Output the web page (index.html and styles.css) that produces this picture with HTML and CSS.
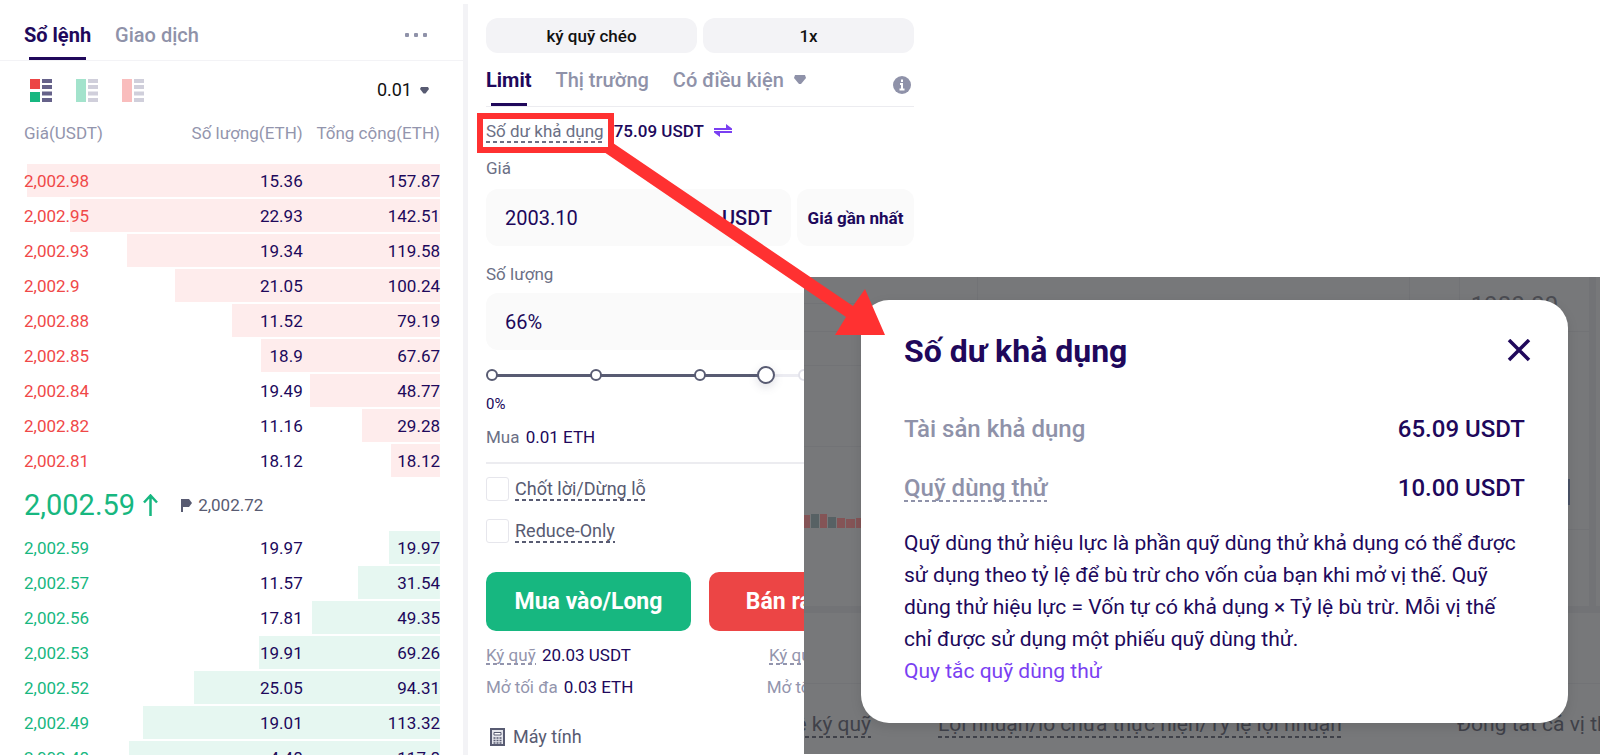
FILE: index.html
```html
<!DOCTYPE html>
<html lang="vi">
<head>
    <meta charset="UTF-8">
    <meta name="viewport" content="width=device-width, initial-scale=1.0">
    <title>Số dư khả dụng</title>
    <link rel="stylesheet" href="styles.css">
</head>
<body>
    <div class="page">
        <section class="order-book">
            <nav class="book-tabs">
                <button type="button" class="tab active">Sổ lệnh</button>
                <button type="button" class="tab">Giao dịch</button>
                <button type="button" class="more" aria-label="Thêm">
                    <svg width="22" height="4" viewBox="0 0 22 4" fill="#8f92a9">
                        <rect x="0" y="0" width="4" height="4" rx="1"/>
                        <rect x="9" y="0" width="4" height="4" rx="1"/>
                        <rect x="18" y="0" width="4" height="4" rx="1"/>
                    </svg>
                </button>
            </nav>

            <div class="book-tools">
                <button type="button" class="view" aria-label="Tất cả">
                    <svg width="22" height="23" viewBox="0 0 22 23">
                        <rect width="10" height="10" fill="#ec4545"/>
                        <rect y="13" width="10" height="10" fill="#17b780"/>
                        <path d="M12 2h10M12 8h10M12 14.500h10M12 21h10" stroke="#66628a" stroke-width="4"/>
                    </svg>
                </button>
                <button type="button" class="view" aria-label="Lệnh mua">
                    <svg width="22" height="23" viewBox="0 0 22 23">
                        <rect width="10" height="23" fill="#a3e3cc"/>
                        <path d="M12 2h10M12 8h10M12 14.500h10M12 21h10" stroke="#d0cfdb" stroke-width="4"/>
                    </svg>
                </button>
                <button type="button" class="view" aria-label="Lệnh bán">
                    <svg width="22" height="23" viewBox="0 0 22 23">
                        <rect width="10" height="23" fill="#f9bdbd"/>
                        <path d="M12 2h10M12 8h10M12 14.500h10M12 21h10" stroke="#d0cfdb" stroke-width="4"/>
                    </svg>
                </button>
                <button type="button" class="step">
                    0.01
                    <svg width="9" height="7" viewBox="0 0 9 7"><path d="M1 0h7l1 2-3.500 4.500h-2L0 2z" fill="#585b72"/></svg>
                </button>
            </div>

            <table class="orders asks">
                <thead>
                    <tr><th>Giá(USDT)</th><th>Số lượng(ETH)</th><th>Tổng cộng(ETH)</th></tr>
                </thead>
                <tbody>
                    <tr style="--depth: 99.4%"><td>2,002.98</td><td>15.36</td><td>157.87</td></tr>
                    <tr style="--depth: 89%"><td>2,002.95</td><td>22.93</td><td>142.51</td></tr>
                    <tr style="--depth: 75.2%"><td>2,002.93</td><td>19.34</td><td>119.58</td></tr>
                    <tr style="--depth: 63.7%"><td>2,002.9</td><td>21.05</td><td>100.24</td></tr>
                    <tr style="--depth: 50%"><td>2,002.88</td><td>11.52</td><td>79.19</td></tr>
                    <tr style="--depth: 43%"><td>2,002.85</td><td>18.9</td><td>67.67</td></tr>
                    <tr style="--depth: 31.3%"><td>2,002.84</td><td>19.49</td><td>48.77</td></tr>
                    <tr style="--depth: 18.8%"><td>2,002.82</td><td>11.16</td><td>29.28</td></tr>
                    <tr style="--depth: 11.8%"><td>2,002.81</td><td>18.12</td><td>18.12</td></tr>
                </tbody>
            </table>

            <div class="last-price">
                <strong>2,002.59</strong>
                <svg class="up" width="15" height="22" viewBox="0 0 15 22" fill="none" stroke="#17b780" stroke-width="2.500"><path d="M7.500 22V2M1 8.500l6.500-7 6.500 7"/></svg>
                <svg width="11" height="13" viewBox="0 0 11 13" fill="#585b72"><path d="M0 0h8l3 4-3 4H2v5H0z"/></svg>
                <span>2,002.72</span>
            </div>

            <table class="orders bids">
                <tbody>
                    <tr style="--depth: 12.3%"><td>2,002.59</td><td>19.97</td><td>19.97</td></tr>
                    <tr style="--depth: 19.7%"><td>2,002.57</td><td>11.57</td><td>31.54</td></tr>
                    <tr style="--depth: 30.8%"><td>2,002.56</td><td>17.81</td><td>49.35</td></tr>
                    <tr style="--depth: 43.5%"><td>2,002.53</td><td>19.91</td><td>69.26</td></tr>
                    <tr style="--depth: 59.1%"><td>2,002.52</td><td>25.05</td><td>94.31</td></tr>
                    <tr style="--depth: 71.4%"><td>2,002.49</td><td>19.01</td><td>113.32</td></tr>
                    <tr style="--depth: 74.8%"><td>2,002.48</td><td>4.48</td><td>117.8</td></tr>
                </tbody>
            </table>
        </section>

        <form class="trade">
            <div class="modes">
                <button type="button">ký quỹ chéo</button>
                <button type="button">1x</button>
            </div>

            <nav class="order-types">
                <button type="button" class="tab active">Limit</button>
                <button type="button" class="tab">Thị trường</button>
                <button type="button" class="tab">
                    Có điều kiện
                    <svg width="12" height="9" viewBox="0 0 12 9"><path d="M1 0h10l1 3-5 6H5L0 3z" fill="#8f92a9"/></svg>
                </button>
                <button type="button" class="info" aria-label="Thông tin">
                    <svg width="18" height="18" viewBox="0 0 18 18">
                        <circle cx="9" cy="9" r="9" fill="#8f92a9"/>
                        <path d="M9 3.500v2.500M7 8h2v5M6.500 13.500h5" fill="none" stroke="#fff" stroke-width="2"/>
                    </svg>
                </button>
            </nav>

            <div class="balance">
                <span class="dashed">Số dư khả dụng</span>
                <b>75.09 USDT</b>
                <svg width="18" height="13" viewBox="0 0 18 13" fill="#7a3ff2"><path d="M0 4h12V0l6 4.500V6H0zM18 9H6v4L0 8.500V7h18z"/></svg>
            </div>

            <label class="field-label" for="price">Giá</label>
            <div class="price-row">
                <div class="field">
                    <input type="text" id="price" value="2003.10">
                    <b>USDT</b>
                </div>
                <button type="button">Giá gần nhất</button>
            </div>

            <label class="field-label amount-label" for="amount">Số lượng</label>
            <div class="field">
                <input type="text" id="amount" value="66%">
            </div>

            <div class="slider">
                <div class="stops"><i class="on"></i><i class="on"></i><i class="on"></i><i></i><i></i></div>
                <input type="range" min="0" max="100" value="66" aria-label="Số lượng">
            </div>
            <div class="percent">0%</div>

            <div class="buy-amount">Mua <span>0.01 ETH</span></div>

            <label class="check"><input type="checkbox"><span class="dashed">Chốt lời/Dừng lỗ</span></label>
            <label class="check"><input type="checkbox"><span class="dashed">Reduce-Only</span></label>

            <div class="actions">
                <button type="button" class="long">Mua vào/Long</button>
                <button type="button" class="short">Bán ra/Short</button>
            </div>

            <div class="cost">
                <p><span class="dashed">Ký quỹ</span> <em>20.03 USDT</em></p>
                <p><span class="dashed">Ký quỹ</span> <em>20.03 USDT</em></p>
            </div>
            <div class="cost">
                <p>Mở tối đa <em>0.03 ETH</em></p>
                <p>Mở tối đa <em>0.03 ETH</em></p>
            </div>

            <a class="calculator" href="#">
                <svg width="15" height="18" viewBox="0 0 15 18">
                    <path d="M1 1h13v16H1z" fill="#e4e5ec" stroke="#585b72" stroke-width="2"/>
                    <path d="M4 4.500h7v2.500H4z" fill="#fff" stroke="#585b72"/>
                    <path d="M3.500 10h2m1 0h2m1 0h2M3.500 12.500h2m1 0h2m1 0h2M3.500 15h2m1 0h2m1 0h2" stroke="#585b72" stroke-width="1.500"/>
                </svg>
                Máy tính
            </a>
        </form>

        <div class="overlay">
            <!-- dimmed chart and positions table behind the dialog -->
            <svg class="backdrop" aria-hidden="true">
                <g fill="#727376">
                    <rect x="173" y="0" width="1" height="30"/>
                    <rect x="605" y="0" width="1" height="30"/>
                    <rect x="655" y="0" width="1" height="30"/>
                    <rect x="0" y="26" width="60" height="1"/>
                    <rect x="0" y="54" width="785" height="1"/>
                    <rect x="0" y="88" width="60" height="1"/>
                    <rect x="0" y="169" width="60" height="1"/>
                    <rect x="760" y="252" width="25" height="1"/>
                    <rect x="785" y="0" width="7" height="329"/>
                    <rect x="0" y="329" width="100%" height="7"/>
                    <rect x="0" y="406" width="100%" height="1"/>
                </g>
                <g fill="#845456">
                    <rect x="0" y="238" width="6" height="13"/>
                    <rect x="16" y="237" width="7" height="14"/>
                    <rect x="33" y="241" width="8" height="10"/>
                    <rect x="42" y="242" width="9" height="9"/>
                    <rect x="52" y="241" width="9" height="10"/>
                </g>
                <g fill="#576164">
                    <rect x="7" y="237" width="8" height="14"/>
                    <rect x="24" y="240" width="8" height="11"/>
                </g>
                <rect x="764" y="202" width="2" height="26" fill="#4a5366"/>
            </svg>
            <span class="axis-price">1980.00</span>
            <div class="columns">
                <span class="margin-rate"><span class="dashed">Tỷ lệ ký quỹ</span></span>
                <span class="profit"><span class="dashed">Lợi nhuận/lỗ chưa thực hiện/Tỷ lệ lợi nhuận</span></span>
                <span>Đóng tất cả vị thế</span>
            </div>

            <div class="dialog" role="dialog" aria-labelledby="dialogTitle">
                <header>
                    <h1 id="dialogTitle">Số dư khả dụng</h1>
                    <button type="button" class="close" aria-label="Đóng">
                        <svg width="24" height="24" viewBox="0 0 24 24" fill="none" stroke="#20085b" stroke-width="3.500"><path d="M2 1l20 20M22 1L2 21"/></svg>
                    </button>
                </header>
                <dl>
                    <div><dt>Tài sản khả dụng</dt><dd>65.09 USDT</dd></div>
                    <div><dt><span class="dashed">Quỹ dùng thử</span></dt><dd>10.00 USDT</dd></div>
                </dl>
                <p>Quỹ dùng thử hiệu lực là phần quỹ dùng thử khả dụng có thể được sử dụng theo tỷ lệ để bù trừ cho vốn của bạn khi mở vị thế. Quỹ dùng thử hiệu lực = Vốn tự có khả dụng × Tỷ lệ bù trừ. Mỗi vị thế chỉ được sử dụng một phiếu quỹ dùng thử.</p>
                <a href="#">Quy tắc quỹ dùng thử</a>
            </div>
        </div>

        <!-- callout from the balance label to the dialog -->
        <svg class="pointer" width="410" height="224" viewBox="0 0 410 224" aria-hidden="true">
            <rect x="3" y="3" width="131" height="34" fill="none" stroke="#ff3131" stroke-width="6"/>
            <path d="M136 30l240 163 12-17 20 46h-50l11-18L127 39z" fill="#ff3131"/>
        </svg>
    </div>
</body>
</html>
```
FILE: styles.css
```css
* {
    margin: 0;
    padding: 0;
    box-sizing: border-box;
}

body {
    font-family: Roboto, "Liberation Sans", sans-serif;
    font-size: 17px;
    line-height: 24px;
    color: #20085b;
    background: #fff;
}

button {
    border: none;
    background: none;
    font: inherit;
    color: inherit;
    white-space: nowrap;
    cursor: pointer;
}

input {
    font: inherit;
    color: inherit;
}

svg {
    display: block;
    flex: none;
}

.page {
    position: relative;
    height: 100vh;
    overflow: hidden;
    display: grid;
    grid-template-columns: 29.25% 29%;
}

.dashed {
    background: repeating-linear-gradient(90deg, currentColor 0 4px, transparent 4px 7px) left bottom / 100% 2px no-repeat;
}

/* tabs */
.tab {
    position: relative;
    display: flex;
    align-items: center;
    gap: 10px;
    font-size: 20px;
    font-weight: 500;
    color: #8f92a9;
}

.tab.active {
    font-weight: 700;
    color: #20085b;
}

.tab.active::after {
    content: "";
    position: absolute;
    left: 5px;
    right: 5px;
    bottom: 0;
    height: 3px;
    background: #20085b;
}

/* order book */
.order-book {
    margin-top: 4px;
    border-right: 5px solid #f3f3f6;
}

.book-tabs {
    display: flex;
    gap: 24px;
    height: 57px;
    padding: 0 36px 0 24px;
    border-bottom: 1px solid #f3f3f6;
}

.book-tabs button {
    padding-top: 6px;
}

.more {
    margin-left: auto;
}

.book-tools {
    display: flex;
    align-items: center;
    gap: 24px;
    height: 58px;
    padding: 0 34px 0 30px;
}

.step {
    display: flex;
    align-items: center;
    gap: 8px;
    margin-left: auto;
    font-size: 18px;
    color: #111;
}

.orders {
    width: calc(100% - 47px);
    margin: 0 23px 0 24px;
    border-collapse: collapse;
    table-layout: fixed;
}

.orders th {
    height: 45px;
    padding-bottom: 17px;
    font-weight: 400;
    color: #9395ad;
    text-align: right;
    white-space: nowrap;
}

.orders td {
    height: 35px;
    padding-bottom: 2px;
    text-align: right;
}

.orders th:first-child,
.orders td:first-child {
    width: 32%;
    text-align: left;
}

.orders th:nth-child(2),
.orders td:nth-child(2) {
    width: 35%;
}

.orders tbody tr {
    background-repeat: no-repeat;
    background-position: right top;
    background-size: var(--depth) 33px;
}

.asks tbody tr {
    background-image: linear-gradient(#feecec, #feecec);
}

.bids tbody tr {
    background-image: linear-gradient(#e6f7f1, #e6f7f1);
}

.asks td:first-child {
    color: #f04848;
}

.bids td:first-child {
    color: #17b780;
}

.last-price {
    display: flex;
    align-items: center;
    height: 52px;
    padding: 0 24px;
    color: #585b72;
}

.last-price strong {
    font-size: 29px;
    font-weight: 400;
    color: #17b780;
}

.last-price .up {
    margin: 0 23px 0 8px;
}

.last-price span {
    margin-left: 6px;
}

/* trade form */
.trade {
    padding: 18px 18px 0;
}

.modes {
    display: grid;
    grid-template-columns: 1fr 1fr;
    gap: 6px;
}

.modes button {
    height: 35px;
    border-radius: 12px;
    background: #f3f3f6;
    font-weight: 500;
    color: #111;
}

.order-types {
    display: flex;
    gap: 24px;
    height: 54px;
    border-bottom: 1px solid #ececf0;
}

.info {
    margin-left: auto;
    padding: 10px 3px 0 0;
}

.balance {
    display: flex;
    align-items: center;
    gap: 10px;
    height: 47px;
    color: #6b6f85;
}

.balance b {
    font-weight: 500;
    color: #20085b;
}

.field-label {
    display: block;
    height: 35px;
    padding-top: 2px;
    color: #6b6f85;
}

.amount-label {
    height: 47px;
    padding-top: 16px;
}

.price-row {
    display: grid;
    grid-template-columns: 305fr 117fr;
    gap: 6px;
}

.price-row button {
    border-radius: 12px;
    background: #fafafa;
    font-weight: 700;
}

.field {
    display: flex;
    align-items: center;
    min-width: 0;
    height: 57px;
    padding: 0 19px;
    border-radius: 12px;
    background: #fafafa;
    font-size: 20px;
}

.field input {
    flex: 1;
    min-width: 0;
    border: none;
    outline: none;
    background: none;
}

.field b {
    font-weight: 500;
}

.slider {
    position: relative;
    height: 18px;
    margin-top: 16px;
}

.slider input {
    position: absolute;
    inset: 0;
    width: 100%;
    height: 18px;
    appearance: none;
    background: none;
}

.slider input::-webkit-slider-thumb {
    appearance: none;
    width: 18px;
    height: 18px;
    border: 2px solid #585b72;
    border-radius: 50%;
    background: #fff;
    box-shadow: 0 3px 10px rgba(88, 91, 114, 0.2);
}

.stops {
    display: flex;
    align-items: center;
    justify-content: space-between;
    height: 18px;
    background: linear-gradient(90deg, #585b72 66%, #ececf2 66%) center / 98% 3px no-repeat;
}

.stops i {
    width: 12px;
    height: 12px;
    border: 2px solid #e2e2ea;
    border-radius: 50%;
    background: #fff;
}

.stops .on {
    border-color: #585b72;
}

.percent {
    margin-top: 8px;
    font-size: 15px;
}

.buy-amount {
    height: 48px;
    padding-top: 9px;
    border-bottom: 2px solid #ececf0;
    color: #6b6f85;
}

.buy-amount span {
    margin-left: 2px;
    color: #20085b;
}

.check {
    display: flex;
    align-items: center;
    gap: 6px;
    margin-top: 18px;
    font-size: 18px;
    color: #585b72;
}

.buy-amount + .check {
    margin-top: 13px;
}

.check input {
    appearance: none;
    width: 23px;
    height: 24px;
    border: 1px solid #e6e6ec;
    border-radius: 3px;
}

.actions {
    display: grid;
    grid-template-columns: 1fr 1fr;
    gap: 18px;
    margin: 29px 0 12px;
}

.actions button {
    height: 59px;
    border-radius: 10px;
    font-size: 23px;
    font-weight: 700;
    color: #fff;
}

.long {
    background: #17b780;
}

.short {
    background: #ec4545;
}

.cost {
    display: flex;
    justify-content: space-between;
    margin-bottom: 8px;
    color: #9395ad;
}

.cost em {
    margin-left: 2px;
    font-style: normal;
    color: #20085b;
}

.calculator {
    display: flex;
    align-items: center;
    gap: 8px;
    margin: 26px 0 0 4px;
    color: #585b72;
    font-size: 18px;
    text-decoration: none;
}

/* dialog over the dimmed page */
.overlay {
    position: absolute;
    left: 50.25%;
    right: 0;
    top: 277px;
    bottom: 1px;
    overflow: hidden;
    padding: 23px 32px 0 57px;
    background: #77787a;
    color: #3f4149;
}

.backdrop {
    position: absolute;
    left: 0;
    top: 0;
    width: 100%;
    height: 100%;
}

.axis-price {
    position: absolute;
    top: 16px;
    right: 42px;
    font-size: 24px;
    color: #4b4c52;
}

.columns {
    position: absolute;
    left: 0;
    right: 0;
    bottom: 16px;
    display: flex;
    font-size: 21px;
    white-space: nowrap;
}

.columns > span {
    flex: none;
}

.columns .dashed {
    padding-bottom: 2px;
}

.margin-rate {
    display: flex;
    justify-content: flex-end;
    width: 67px;
    margin-right: 67px;
}

.profit {
    width: 519px;
}

.dialog {
    position: relative;
    padding: 32px 43px 36px;
    border-radius: 28px;
    background: #fff;
    box-shadow: 0 4px 12px rgba(0, 0, 0, 0.1);
    font-size: 21px;
    line-height: 32px;
    color: #20085b;
}

.dialog header {
    display: flex;
    align-items: center;
    justify-content: space-between;
    height: 38px;
}

.dialog h1 {
    font-size: 32px;
    font-weight: 700;
}

.close {
    margin-right: -6px;
}

.dialog dl {
    display: grid;
    gap: 27px;
    margin: 43px 0 23px;
    font-size: 24px;
    font-weight: 500;
}

.dialog dl div {
    display: flex;
    justify-content: space-between;
}

.dialog dt {
    color: #8f92a9;
}

.dialog a {
    color: #7a3ff2;
    text-decoration: none;
}

/* callout */
.pointer {
    position: absolute;
    left: calc(29.25% + 9px);
    top: 113px;
}
```
